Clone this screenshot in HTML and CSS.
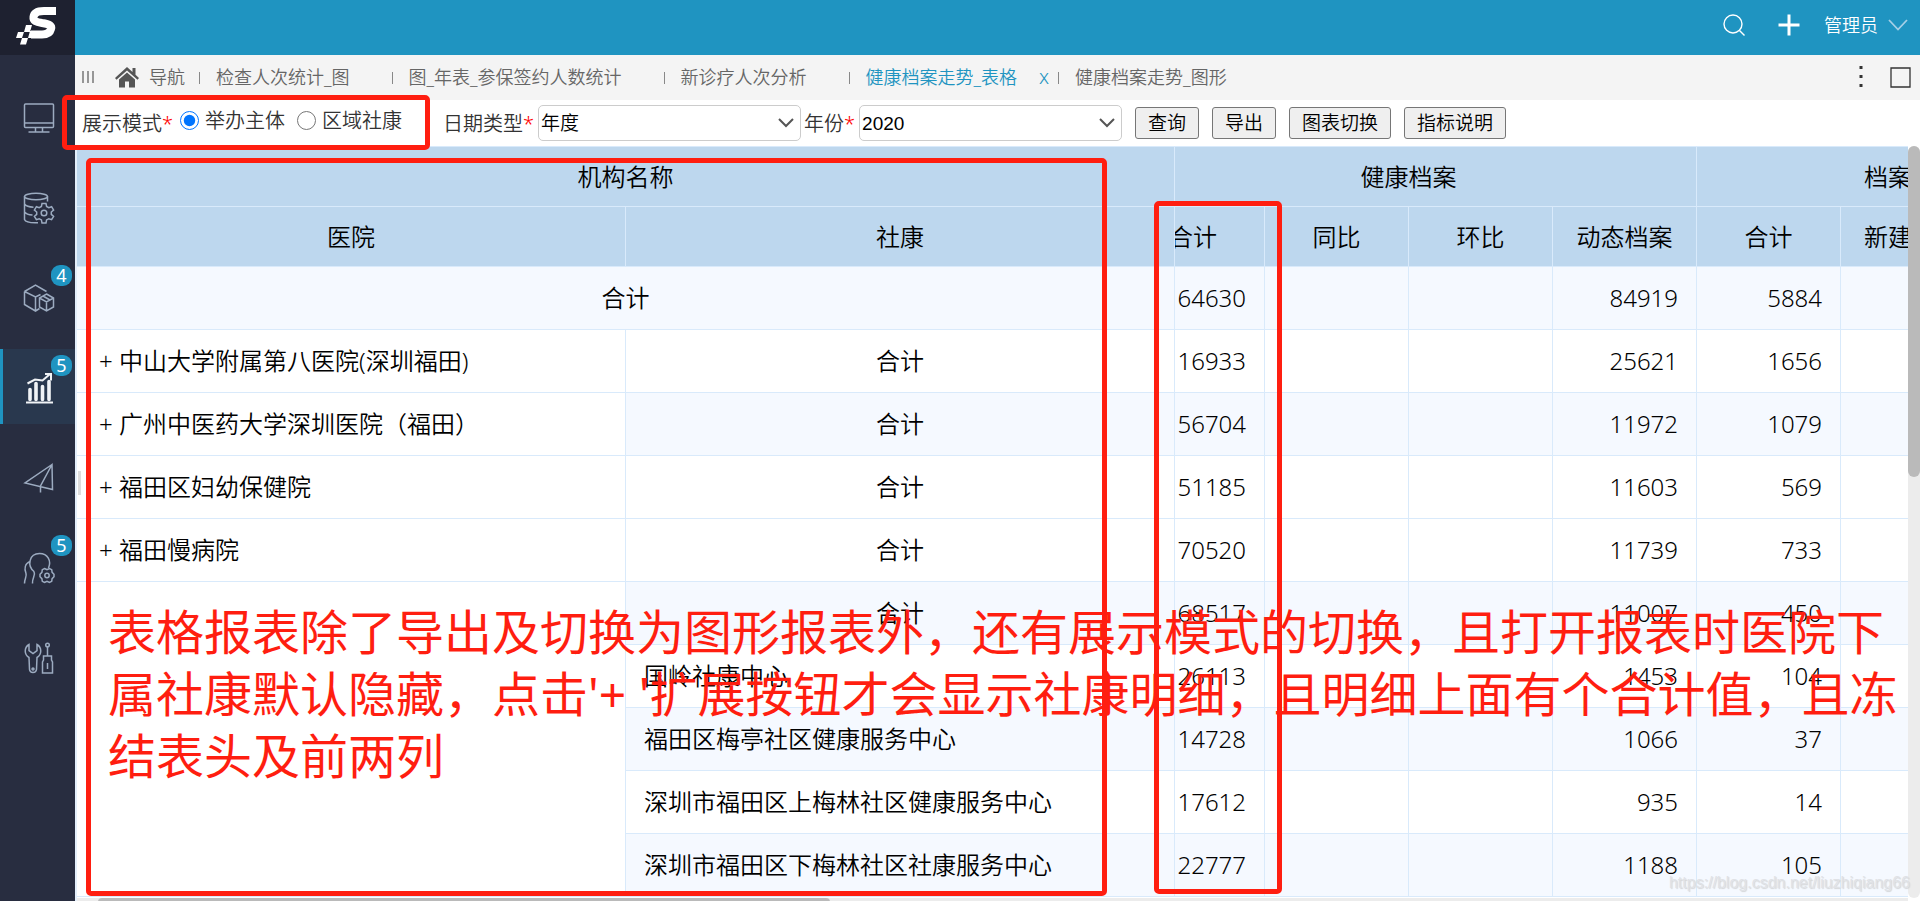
FILE: index.html
```html
<!DOCTYPE html>
<html lang="zh-CN">
<head>
<meta charset="utf-8">
<title>健康档案走势_表格</title>
<link rel="stylesheet" href="styles.css">
</head>
<body>
<div class="app">
  <aside class="sidebar">
    <a class="logo" href="#" aria-label="首页">
      <svg viewBox="0 0 75 55" width="75" height="55"><path d="M56 11H44C37 11 34 13 33.500 17C33 21 36 22 42 23C50 24 52 26 51 29C50 33 47 34.500 42 34.500H31" fill="none" stroke="#fff" stroke-width="8"/><path d="M26 25h6l-2 7h-6zM18 32h6l-2 6h-6zM22 38h6l-2 6.500h-6zM30 31h5v7h-7z" fill="#fff"/></svg>
    </a>
    <nav class="menu">
      <a class="menu-item" href="#" aria-label="工作台"><svg class="icon" viewBox="0 0 32 32"><rect x="1.500" y="2" width="29" height="23.500" rx="1"/><path d="M2 21h28M12.500 26v4M19.500 26v4M5.500 30h21"/></svg></a>
      <a class="menu-item" href="#" aria-label="数据"><svg class="icon" viewBox="0 0 32 32"><ellipse cx="13" cy="4.500" rx="11.500" ry="3.300"/><path d="M1.500 4.500v23c1 2.500 7 3.500 13.500 3.200M24.500 4.500v5M1.500 12c1.500 2 5 3 9 3.200M1.500 20c1.500 2 4 2.800 8 3"/><path d="m19 11.500 4 0 .6 3 2.200 1.200 2.800-1 2 3.300-2.300 2v2.400l2.300 2-2 3.300-2.800-1-2.200 1.200-.6 3h-4l-.6-3-2.200-1.200-2.800 1-2-3.300 2.300-2v-2.400l-2.300-2 2-3.300 2.800 1 2.200-1.200z"/><circle cx="21" cy="21" r="2.800"/></svg></a>
      <a class="menu-item" href="#" aria-label="资源"><svg class="icon" viewBox="0 0 32 32"><path d="M1.500 9.500 12.500 3l11 6.500M1.500 9.500v13L12.500 29l4-2.500M1.500 9.500l11 5.500 5-2.500M12.500 15v14"/><path d="m23.500 12 7 4v9l-7 4-7-4v-9zM16.500 16l7 4 7-4M23.500 20v9M20 14l7 4"/></svg><span class="badge">4</span></a>
      <a class="menu-item active" href="#" aria-label="报表"><svg class="icon" viewBox="0 0 32 32"><path d="M3 30.500h27" stroke-width="2"/><path d="M7 17.500v10M13 11.500v16M19.500 14.500v13M26 9.500v18" stroke-width="3.600" stroke-linecap="round"/><path d="m4.500 11.500 7.500-4 7.500 1 7-6M22 2h6v6.500" stroke-width="2"/></svg><span class="badge">5</span></a>
      <a class="menu-item" href="#" aria-label="发送"><svg class="icon" viewBox="0 0 32 32"><path d="M29 2.500 2 21 29.500 27.500zM29 2.500 17.500 24v6.500"/></svg></a>
      <a class="menu-item" href="#" aria-label="用户设置"><svg class="icon" viewBox="0 0 32 32"><path d="M11 19.500C4 14 6 1.500 16.500 1.500C25 1.500 28.500 9 25.500 16M11 19.500c2 4-2 6-1.500 12M7 9.500c-5 2-6 7-4 12 1 3-1.500 5-1.500 10"/><path d="m21.500 16.500 2.500 1.200 2.500-1.200 2.200 1.200.4 2.700 1.900 1.800v2.600l-1.900 1.800-.4 2.700-2.200 1.200-2.500-1.200-2.500 1.200-2.200-1.200-.4-2.700-1.900-1.800v-2.600l1.900-1.800.4-2.700z"/><circle cx="24" cy="23.500" r="2.200"/></svg><span class="badge">5</span></a>
      <a class="menu-item" href="#" aria-label="工具"><svg class="icon" viewBox="0 0 32 32"><path d="M6 2.500v6l4 3 4-3v-6c5 3 5 10 0 13l-.5 12c-.5 4-6.500 4-7 0l-.5-12c-5-3-5-10 0-13z"/><circle cx="10" cy="27" r="1"/><circle cx="24.500" cy="3" r="1.800"/><path d="M24.500 5v9M20.500 14h8v4l1 2v11h-10V20l1-2zM24.500 21v6"/></svg></a>
    </nav>
  </aside>
  <div class="main">
    <header class="topbar">
      <button class="top-btn" aria-label="搜索"><svg viewBox="0 0 24 24" width="24" height="24"><circle cx="11" cy="11" r="9" fill="none" stroke="#fff" stroke-width="1.400"/><path d="m17.500 17.500 5 5" stroke="#fff" stroke-width="1.400"/></svg></button>
      <button class="top-btn" aria-label="新增"><svg viewBox="0 0 22 22" width="22" height="22"><path d="M11 .5v21M.5 11h21" stroke="#fff" stroke-width="3"/></svg></button>
      <button class="user">管理员<svg viewBox="0 0 20 12" width="20" height="12"><path d="m1 1 9 9.500L19 1" fill="none" stroke="#a5cfe6" stroke-width="1.800"/></svg></button>
    </header>
    <div class="tabs">
      <svg class="grip" viewBox="0 0 12 12" width="12" height="12"><path d="M1 0v12M6 0v12M11 0v12" stroke="#777" stroke-width="1.500"/></svg>
      <a class="tab home" href="#"><svg viewBox="0 0 24 21" width="24" height="21"><path d="M12 0 0 11l1.500 1.700L12 3.500l10.500 9.200L24 11l-3.500-3.200V1h-3v4zM12 5.500 4 12.500V20.500h6v-6h4v6h6v-8z" fill="#555"/></svg>导航</a>
      <a class="tab" href="#">检查人次统计_图</a>
      <a class="tab" href="#">图_年表_参保签约人数统计</a>
      <a class="tab" href="#">新诊疗人次分析</a>
      <a class="tab current" href="#">健康档案走势_表格<span class="close">x</span></a>
      <a class="tab last" href="#">健康档案走势_图形</a>
      <div class="tab-tools">
        <button class="top-btn" aria-label="更多"><svg viewBox="0 0 4 22" width="4" height="22"><path d="M.5 0h3v3h-3zM.5 9h3v3h-3zM.5 18h3v3h-3z" fill="#333"/></svg></button>
        <button class="top-btn" aria-label="最大化"><svg viewBox="0 0 21 21" width="21" height="21"><path d="M1 1h19v19H1z" fill="none" stroke="#333" stroke-width="1.300"/></svg></button>
      </div>
    </div>
    <form class="filters">
      <div class="mode" role="radiogroup" aria-label="展示模式">
        <span class="label">展示模式<i>*</i></span>
        <label class="radio"><input type="radio" name="mode" checked>举办主体</label>
        <label class="radio"><input type="radio" name="mode">区域社康</label>
      </div>
      <label class="label" for="dtype">日期类型<i>*</i></label>
      <select id="dtype"><option>年度</option></select>
      <label class="label year" for="year">年份<i>*</i></label>
      <select id="year"><option>2020</option></select>
      <div class="actions">
        <button type="button">查询</button>
        <button type="button">导出</button>
        <button type="button">图表切换</button>
        <button type="button">指标说明</button>
      </div>
    </form>
    <div class="report">
      <div class="pane">
        <div class="grid">
          <table>
            <colgroup><col><col><col class="w-cut"><col class="w-num"><col class="w-num"><col class="w-num"><col class="w-num"><col class="w-end"></colgroup>
            <thead>
              <tr><th colspan="2">机构名称</th><th colspan="4" class="group">健康档案</th><th colspan="2" class="group-end">档案</th></tr>
              <tr><th>医院</th><th>社康</th><th class="cut"><div>合计</div></th><th>同比</th><th>环比</th><th>动态档案</th><th>合计</th><th class="end">新建</th></tr>
            </thead>
            <tbody>
              <tr class="tint"><td colspan="2" class="mid">合计</td><td>64630</td><td></td><td></td><td>84919</td><td>5884</td><td></td></tr>
              <tr><td class="org"><button>+</button> 中山大学附属第八医院(深圳福田)</td><td class="mid">合计</td><td>16933</td><td></td><td></td><td>25621</td><td>1656</td><td></td></tr>
              <tr class="tint"><td class="org"><button>+</button> 广州中医药大学深圳医院（福田）</td><td class="mid">合计</td><td>56704</td><td></td><td></td><td>11972</td><td>1079</td><td></td></tr>
              <tr><td class="org"><button>+</button> 福田区妇幼保健院</td><td class="mid">合计</td><td>51185</td><td></td><td></td><td>11603</td><td>569</td><td></td></tr>
              <tr><td class="org"><button>+</button> 福田慢病院</td><td class="mid">合计</td><td>70520</td><td></td><td></td><td>11739</td><td>733</td><td></td></tr>
              <tr class="tint"><td class="org" rowspan="5"></td><td class="mid">合计</td><td>68517</td><td></td><td></td><td>11007</td><td>450</td><td></td></tr>
              <tr><td class="name">国岭社康中心</td><td>26113</td><td></td><td></td><td>1453</td><td>104</td><td></td></tr>
              <tr class="tint"><td class="name">福田区梅亭社区健康服务中心</td><td>14728</td><td></td><td></td><td>1066</td><td>37</td><td></td></tr>
              <tr><td class="name">深圳市福田区上梅林社区健康服务中心</td><td>17612</td><td></td><td></td><td>935</td><td>14</td><td></td></tr>
              <tr class="tint"><td class="name">深圳市福田区下梅林社区社康服务中心</td><td>22777</td><td></td><td></td><td>1188</td><td>105</td><td></td></tr>
            </tbody>
          </table>
        </div>
        <div class="vbar"><div class="vthumb"></div></div>
      </div>
      <div class="hbar"><div class="hthumb"></div></div>
    </div>
  </div>
  <div class="splitter"></div>
  <div class="mark mark-mode"></div>
  <div class="mark mark-frozen"></div>
  <div class="mark mark-total"></div>
  <p class="note">表格报表除了导出及切换为图形报表外，还有展示模式的切换，且打开报表时医院下<br>属社康默认隐藏，点击'+ '扩展按钮才会显示社康明细，且明细上面有个合计值，且冻<br>结表头及前两列</p>
  <span class="watermark">https://blog.csdn.net/liuzhiqiang66</span>
</div>
</body>
</html>
```
FILE: styles.css
```css
* { box-sizing: border-box; }
body {
  margin: 0;
  font-family: "Noto Sans", "Noto Sans CJK SC", sans-serif;
  font-weight: 350;
  color: #000;
  background: #fff;
}
a { color: inherit; text-decoration: none; }
button { font: inherit; color: inherit; }
svg { display: block; flex: none; }
.app { position: relative; display: flex; min-height: 100vh; overflow: hidden; }

.sidebar { width: 75px; flex: none; background: #282d40; }
.logo { display: block; height: 55px; background: #1e2130; }
.menu { display: flex; flex-direction: column; gap: 15px; padding-top: 24px; }
.menu-item {
  position: relative;
  display: flex;
  align-items: center;
  justify-content: center;
  height: 75px;
  padding: 2px 0 0 3px;
  color: #9cabc0;
}
.menu-item.active { background: #29384e; box-shadow: inset 3px 0 #1f94c1; color: #f0f3f6; }
.icon { width: 32px; height: 32px; fill: none; stroke: currentColor; stroke-width: 1.5; }
.badge {
  position: absolute;
  top: 6px;
  right: 3px;
  width: 21px;
  height: 21px;
  border-radius: 9px;
  background: #1f94c1;
  color: #fff;
  font-size: 18px;
  font-weight: 400;
  line-height: 21px;
  text-align: center;
}

.main { flex: 1; min-width: 0; display: flex; flex-direction: column; }
.topbar {
  display: flex;
  align-items: center;
  justify-content: flex-end;
  gap: 32px;
  height: 55px;
  padding: 0 12px 5px 0;
  background: #1f94c1;
  color: #fff;
}
.top-btn { border: 0; padding: 0; background: none; }
.user { display: flex; align-items: center; gap: 10px; margin-left: -8px; border: 0; padding: 0; background: none; font-size: 18px; line-height: 24px; }

.tabs { display: flex; align-items: center; height: 45px; padding: 0 9px 1px 7px; background: #f4f4f4; color: #666; font-size: 18px; line-height: 24px; white-space: nowrap; }
.tab { position: relative; display: flex; padding: 0 43px 0 16px; }
.tab::after { content: ""; position: absolute; right: 0; top: 7px; width: 1px; height: 12px; background: #888; }
.tab.home { align-items: center; gap: 10px; padding: 0 15px 0 21px; }
.tab.current { color: #1f94c1; padding-right: 0; }
.close { width: 42px; padding-left: 22px; font-size: 20px; }
.tab.last::after { display: none; }
.tab-tools { display: flex; align-items: center; gap: 27px; margin-left: auto; }

.filters { display: flex; align-items: center; height: 46px; padding-left: 7px; font-size: 20px; line-height: 28px; color: #333; white-space: nowrap; }
.mode { display: flex; align-items: center; width: 361px; }
.label { padding-top: 2px; }
.label i { color: #f00; font-style: normal; }
.radio { display: flex; align-items: center; gap: 6px; margin: 0 0 5px 7px; }
.radio + .radio { margin-left: 12px; }
.radio input { width: 19px; height: 19px; margin: 0; accent-color: #0075ff; }
select {
  appearance: none;
  width: 263px;
  height: 36px;
  margin-left: 4px;
  padding: 0 2px;
  border: 1px solid #ccc;
  border-radius: 5px;
  background: #fff url("data:image/svg+xml,%3Csvg xmlns='http://www.w3.org/2000/svg' width='16' height='10'%3E%3Cpath d='M1 1l7 7 7-7' fill='none' stroke='%23555' stroke-width='2'/%3E%3C/svg%3E") no-repeat right 6px center;
  color: #000;
  font: 350 19px "Liberation Sans", "Noto Sans CJK SC", sans-serif;
}
.year { margin-left: 3px; }
.actions { display: flex; gap: 13px; margin-left: 13px; }
.actions button { height: 32px; padding: 0 12px; border: 1px solid #767676; border-radius: 3px; background: #efefef; color: #000; font-size: 19px; line-height: 28px; }

.report { flex: 1; display: flex; flex-direction: column; border-left: 2px solid #e4effb; }
.pane { flex: 1; display: flex; }
.grid { flex: 1; min-width: 0; overflow: hidden; }
table { width: 100%; table-layout: fixed; border-collapse: separate; border-spacing: 0; border-top: 1px solid #d9eafb; font-size: 24px; line-height: 36px; white-space: nowrap; }
.w-cut { width: 90px; }
.w-num { width: 144px; }
.w-end { width: 67px; }
th, td { padding: 0; border: solid #d9eafb; border-width: 0 1px 1px 0; }
th { height: 60px; background: #bdd7ee; font-weight: 350; }
tr > :last-child { border-right: 0; }
td { height: 63px; padding-right: 18px; text-align: right; }
.tint { background: #f5f9ff; }
td.mid { padding: 0; text-align: center; }
td.org { padding-left: 22px; background: #fff; text-align: left; }
td.name { padding-left: 18px; text-align: left; }
td button { border: 0; padding: 0; background: none; }
.group { padding-right: 54px; }
.group-end { padding-left: 167px; text-align: left; }
.end { padding-left: 23px; text-align: left; }
.cut div { display: flex; justify-content: flex-end; padding-right: 47px; overflow: hidden; }
.vbar { width: 12px; border-radius: 6px; background: #ececec; }
.vthumb { height: 44%; border-radius: 6px; background: #bababa; }
.hbar { height: 3px; margin-right: 12px; background: #ececec; overflow: hidden; }
.hthumb { width: 40%; height: 8px; margin-left: 21px; border-radius: 6px; background: #bababa; }

.splitter { position: absolute; left: 78px; top: 471px; width: 3px; height: 24px; background: #ddd; }
.mark { position: absolute; border: 5px solid #ff1e10; border-radius: 5px; pointer-events: none; }
.mark-mode { left: 62px; top: 95px; width: 368px; height: 55px; }
.mark-frozen { left: 86px; top: 158px; width: 1021px; height: 738px; }
.mark-total { left: 1154px; top: 201px; width: 128px; height: 693px; }
.note { position: absolute; left: 108px; top: 601px; margin: 0; color: #ff1e10; font-size: 48px; font-weight: 400; line-height: 62px; white-space: nowrap; }
.watermark { position: absolute; right: 10px; bottom: 6px; color: #e0e2e6; font: 16px/24px "Liberation Sans", sans-serif; text-shadow: 1px 1px 1px #d4d6d8; }
```
